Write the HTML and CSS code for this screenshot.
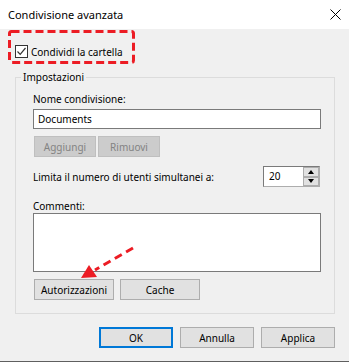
FILE: index.html
```html
<!DOCTYPE html>
<html lang="it">
<head>
    <meta charset="UTF-8">
    <title>Condivisione avanzata</title>
    <link rel="stylesheet" href="styles.css">
</head>
<body>
    <div class="window">
        <!-- Title bar -->
        <div class="titlebar">
            <span class="title">Condivisione avanzata</span>
            <svg class="close" width="11" height="11" viewBox="0 0 11 11">
                <path d="M0.5 0.5 L10.5 10.5 M10.5 0.5 L0.5 10.5" stroke="#000" stroke-width="1" fill="none"/>
            </svg>
        </div>

        <div class="content">
            <!-- Share checkbox -->
            <div class="share-row">
                <span class="checkbox">
                    <svg width="11" height="11" viewBox="0 0 11 11">
                        <path d="M1.5 5.5 L4.2 8.3 L9.5 2" stroke="#333" stroke-width="1.2" fill="none"/>
                    </svg>
                </span>
                <span>Condividi la cartella</span>
            </div>

            <!-- Settings group -->
            <fieldset class="group">
                <legend>Impostazioni</legend>

                <div class="field-label">Nome condivisione:</div>
                <div class="textbox">Documents</div>

                <div class="btn-row small-gap">
                    <button class="btn disabled">Aggiungi</button>
                    <button class="btn disabled">Rimuovi</button>
                </div>

                <div class="limit-row">
                    <span>Limita il numero di utenti simultanei a:</span>
                    <div class="spinner">
                        <span class="spin-value">20</span>
                        <div class="spin-buttons">
                            <span class="spin-btn"><span class="tri-up"></span></span>
                            <span class="spin-btn"><span class="tri-down"></span></span>
                        </div>
                    </div>
                </div>

                <div class="field-label comments-label">Commenti:</div>
                <div class="textarea"></div>

                <div class="btn-row">
                    <button class="btn wide">Autorizzazioni</button>
                    <button class="btn wide">Cache</button>
                </div>
            </fieldset>

            <!-- Dialog buttons -->
            <div class="footer">
                <button class="btn dialog-btn default">OK</button>
                <button class="btn dialog-btn">Annulla</button>
                <button class="btn dialog-btn">Applica</button>
            </div>
        </div>

        <!-- Red annotations -->
        <svg class="annotation" width="349" height="362" viewBox="0 0 349 362">
            <rect x="9.5" y="31.5" width="124" height="31" rx="2" fill="none" stroke="#ec1c24" stroke-width="3" stroke-dasharray="8 4"/>
            <line x1="133" y1="248" x2="95" y2="270" stroke="#ec1c24" stroke-width="3" stroke-dasharray="8 5"/>
            <polygon points="81,278 89,265 97,277" fill="#ec1c24"/>
        </svg>
    </div>
</body>
</html>
```

FILE: styles.css
```css
/* Basic Styles */
body {
    margin: 0;
    font-family: "Noto Sans", "Open Sans", sans-serif;
    font-size: 10px;
    color: #000;
}

.window {
    position: relative;
    width: 349px;
    height: 362px;
    background-color: #f0f0f0;
    box-sizing: border-box;
    border-bottom: 1px solid #5f5f5f;
}

/* Title bar */
.titlebar {
    height: 29px;
    background-color: #fff;
    display: flex;
    align-items: center;
    justify-content: space-between;
    padding: 0 8px;
}

.title {
    font-size: 11px;
    line-height: 16px;
}

/* Checkbox row */
.share-row {
    display: flex;
    align-items: center;
    height: 13px;
    margin: 16px 0 0 15px;
    line-height: 16px;
}

.checkbox {
    width: 11px;
    height: 11px;
    border: 1px solid #333;
    background-color: #fff;
    margin-right: 3px;
    display: flex;
}

/* Group box */
.group {
    margin: 11px 14px 0 15px;
    padding: 6px 13px 13px 17px;
    border: 1px solid #dcdcdc;
    min-width: 0;
}

.group legend {
    padding: 0 2px;
    margin-left: -12px;
    line-height: 16px;
}

.field-label {
    line-height: 16px;
}

.comments-label {
    margin-top: 11px;
    margin-bottom: -1px;
}

.textbox {
    height: 20px;
    box-sizing: border-box;
    margin-top: 2px;
    border: 1px solid #7a7a7a;
    background-color: #fff;
    padding: 0 4px;
    line-height: 18px;
}

.textarea {
    height: 59px;
    box-sizing: border-box;
    border: 1px solid #7a7a7a;
    background-color: #fff;
}

/* Buttons */
.btn-row {
    display: flex;
    gap: 6px;
    margin-top: 7px;
    padding-left: 1px;
}

.btn-row.small-gap {
    gap: 2px;
}

.btn {
    height: 21px;
    box-sizing: border-box;
    border: 1px solid #adadad;
    background-color: #e1e1e1;
    font-family: inherit;
    font-size: 10px;
    color: #000;
    padding: 0;
    line-height: 18px;
}

.btn.disabled {
    width: 62px;
    background-color: #cccccc;
    border-color: #bfbfbf;
    color: #838383;
}

.btn.wide {
    width: 80px;
}

/* Spinner */
.limit-row {
    display: flex;
    align-items: center;
    justify-content: space-between;
    margin-top: 9px;
}

.spinner {
    width: 57px;
    height: 21px;
    box-sizing: border-box;
    margin-right: 1px;
    border: 1px solid #7a7a7a;
    border-right-color: #adadad;
    border-bottom-color: #adadad;
    background-color: #fff;
    display: flex;
    justify-content: space-between;
}

.spin-value {
    padding-left: 5px;
    line-height: 19px;
}

.spin-buttons {
    width: 16px;
    display: flex;
    flex-direction: column;
}

.spin-btn {
    flex: 1;
    box-sizing: border-box;
    border: 1px solid #adadad;
    background-color: #e1e1e1;
    display: flex;
    align-items: center;
    justify-content: center;
}

.tri-up {
    border-left: 3px solid transparent;
    border-right: 3px solid transparent;
    border-bottom: 4px solid #000;
}

.tri-down {
    border-left: 3px solid transparent;
    border-right: 3px solid transparent;
    border-top: 4px solid #000;
}

/* Footer */
.footer {
    display: flex;
    justify-content: flex-end;
    gap: 7px;
    margin-top: 13px;
    padding-right: 14px;
}

.dialog-btn {
    width: 74px;
}

.dialog-btn.default {
    border: 2px solid #0078d7;
}

/* Annotation overlay */
.annotation {
    position: absolute;
    top: 0;
    left: 0;
    pointer-events: none;
}
```
